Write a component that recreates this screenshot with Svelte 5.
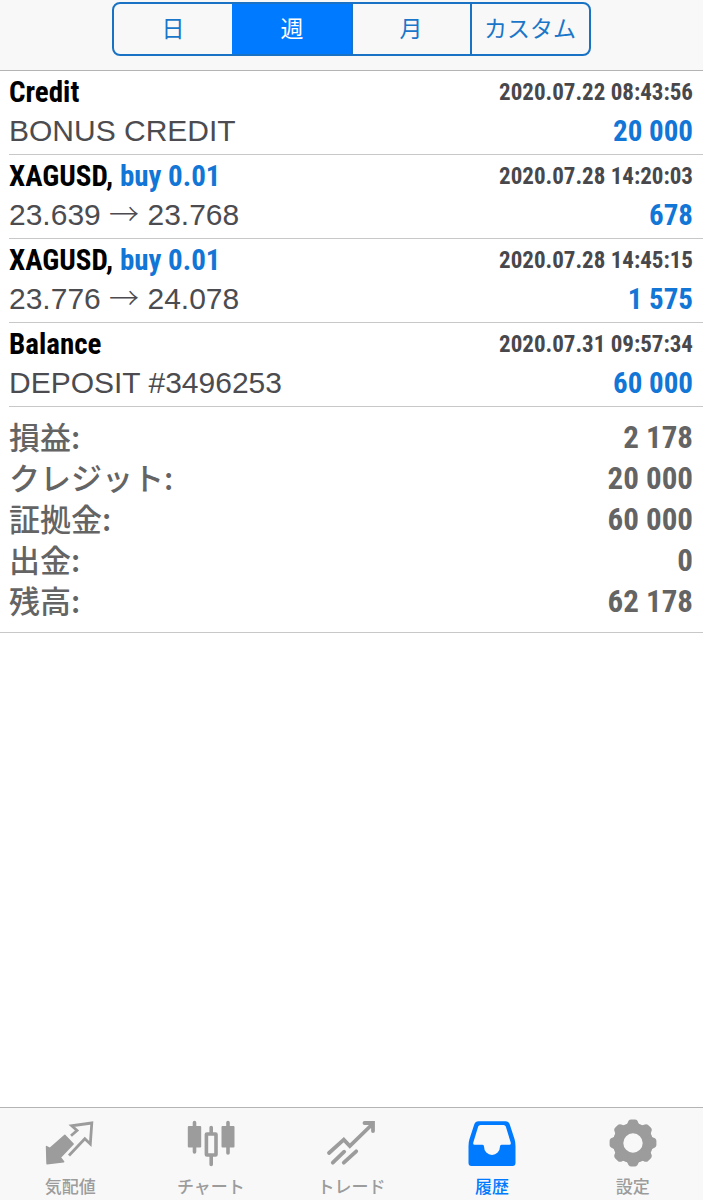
<script lang="ts">
	const periods = ['日', '週', '月', 'カスタム'];
	let period = $state('週');

	const deals = [
		{ title: 'Credit', side: '', time: '2020.07.22 08:43:56', from: 'BONUS CREDIT', to: '', profit: '20 000' },
		{ title: 'XAGUSD,', side: 'buy 0.01', time: '2020.07.28 14:20:03', from: '23.639', to: '23.768', profit: '678' },
		{ title: 'XAGUSD,', side: 'buy 0.01', time: '2020.07.28 14:45:15', from: '23.776', to: '24.078', profit: '1 575' },
		{ title: 'Balance', side: '', time: '2020.07.31 09:57:34', from: 'DEPOSIT #3496253', to: '', profit: '60 000' }
	];

	const summary = [
		['損益:', '2 178'],
		['クレジット:', '20 000'],
		['証拠金:', '60 000'],
		['出金:', '0'],
		['残高:', '62 178']
	];

	const tabs = [
		{ id: 'quotes', label: '気配値' },
		{ id: 'chart', label: 'チャート' },
		{ id: 'trade', label: 'トレード' },
		{ id: 'history', label: '履歴' },
		{ id: 'settings', label: '設定' }
	];
	let tab = $state('history');

	const teeth = [0, 45, 90, 135, 180, 225, 270, 315];
</script>

<div class="app">
	<header class="topbar">
		<div class="segmented">
			{#each periods as p}
				<button class="segment" class:active={period === p} onclick={() => (period = p)}>{p}</button>
			{/each}
		</div>
	</header>

	<main class="content">
		<ul class="deals">
			{#each deals as deal}
				<li class="deal">
					<div class="line">
						<span class="title">{deal.title}{#if deal.side}{' '}<span class="side">{deal.side}</span>{/if}</span>
						<time class="time">{deal.time}</time>
					</div>
					<div class="line">
						<span class="detail">{deal.from}{#if deal.to}{' '}<span class="arrow">→</span>{' '}{deal.to}{/if}</span>
						<span class="profit">{deal.profit}</span>
					</div>
				</li>
			{/each}
		</ul>

		<dl class="summary">
			{#each summary as [label, value]}
				<div class="total">
					<dt>{label}</dt>
					<dd>{value}</dd>
				</div>
			{/each}
		</dl>
	</main>

	<nav class="tabbar">
		{#each tabs as t}
			<button class="tab" class:active={tab === t.id} onclick={() => (tab = t.id)}>
				<svg class="icon" viewBox="0 0 48 48" aria-hidden="true">
					{#if t.id === 'quotes'}
						<path
							d="M.5 27.5 4 29.3 18.8 16.3 27.2 25 14.3 38.5 17.7 42.7 1 44.7Z"
							fill="currentColor"
							stroke="currentColor"
							stroke-width="1.4"
							stroke-linejoin="round"
						/>
						<path d="M25 16.8 31 11.5 25.7 6.8 45.8 4 44.3 25 38.8 19.8 23 36.5" fill="none" stroke="currentColor" stroke-width="2.8" />
					{:else if t.id === 'chart'}
						<path d="M7.5 3.5V33M24.2 8.5V14M24.2 37V45.5M41 3.5V34" fill="none" stroke="currentColor" stroke-width="3.6" stroke-linecap="round" />
						<rect x=".8" y="7" width="13.4" height="21.4" rx="1" fill="currentColor" />
						<rect x="34.5" y="7" width="13" height="21.4" rx="1" fill="currentColor" />
						<rect x="19.4" y="15" width="9.6" height="21" rx="0.5" fill="none" stroke="currentColor" stroke-width="3.6" />
					{:else if t.id === 'trade'}
						<path
							d="M2 34 16.8 20.7 22.8 27 45.5 5M37.5 4H46V12M5.8 43.7 17.2 32.7M16.8 43.7 29.2 32.3"
							fill="none"
							stroke="currentColor"
							stroke-width="3.8"
							stroke-linecap="round"
						/>
					{:else if t.id === 'history'}
						<path
							fill="currentColor"
							fill-rule="evenodd"
							d="M10.5 2.3H37.5Q40.6 2.3 41.7 5.2L46.5 20Q47.5 23 47.5 27V44Q47.5 47 44.5 47H3.5Q.5 47 .5 44V27Q.5 23 1.5 20L6.3 5.2Q7.4 2.3 10.5 2.3ZM12.5 6Q10.7 6 10.2 7.6L5.3 23.5Q4.8 25.7 6.5 25.7H14.5Q16 25.7 16 27.5A8 8.5 0 0 0 32 27.5Q32 25.7 33.5 25.7H41.5Q43.2 25.7 42.7 23.5L37.8 7.6Q37.3 6 35.5 6Z"
						/>
					{:else}
						<circle cx="24" cy="24" r="14.9" fill="none" stroke="currentColor" stroke-width="10.4" />
						{#each teeth as angle}
							<path
								transform="rotate({angle} 24 24)"
								fill="currentColor"
								d="M15 7.8Q17.6 6.8 18.6 4Q19.6 .6 22 .6H26Q28.4 .6 29.4 4Q30.4 6.8 33 7.8L28 12H20Z"
							/>
						{/each}
					{/if}
				</svg>
				<span>{t.label}</span>
			</button>
		{/each}
	</nav>
</div>

<style>
	:global(body) {
		margin: 0;
		background: #fff;
	}
	.app {
		display: flex;
		flex-direction: column;
		min-height: 100vh;
		font-family: 'Liberation Sans', 'Noto Sans CJK JP', sans-serif;
	}
	button {
		margin: 0;
		padding: 0;
		border: 0;
		background: none;
		font-family: inherit;
		cursor: pointer;
	}
	.topbar {
		display: flex;
		justify-content: center;
		padding: 2px 0 14px;
		background: #f8f8f8;
		border-bottom: 1px solid #b4b4b4;
	}
	.segmented {
		display: flex;
		width: 68%;
		height: 54px;
		box-sizing: border-box;
		border: 2px solid #1a72c4;
		border-radius: 8px;
		overflow: hidden;
	}
	.segment {
		flex: 1;
		padding-bottom: 4px;
		color: #1a76c8;
		font-size: 23px;
		font-weight: 400;
	}
	.segment + .segment {
		border-left: 2px solid #1a72c4;
	}
	.segment.active {
		background: #007aff;
		border-color: #007aff;
		color: #fff;
	}
	.content {
		flex: 1;
	}
	.deals {
		margin: 0;
		padding: 0 0 0 9px;
		list-style: none;
	}
	.deal {
		padding: 2px 10px 3px 0;
		border-bottom: 1px solid #c8c8c8;
	}
	.line {
		display: flex;
		justify-content: space-between;
		height: 39px;
		line-height: 39px;
		white-space: nowrap;
	}
	.title,
	.time,
	.profit,
	dd {
		font-family: 'Roboto Condensed', 'Liberation Sans Narrow', 'Liberation Sans', sans-serif;
		font-weight: 700;
	}
	.title {
		color: #000;
		font-size: 29px;
	}
	.side,
	.profit {
		color: #1276d6;
	}
	.time {
		color: #48484c;
		font-size: 23px;
	}
	.detail {
		color: #4c4c50;
		font-size: 30px;
		line-height: 37px;
	}
	.arrow {
		font-family: 'Noto Sans CJK JP', sans-serif;
		font-weight: 300;
		line-height: 1;
	}
	.profit {
		font-size: 29px;
	}
	.summary {
		margin: 0;
		padding: 10px 10px 10px 9px;
		border-bottom: 1px solid #c8c8c8;
		color: #646464;
	}
	.total {
		display: flex;
		justify-content: space-between;
		height: 41px;
		line-height: 41px;
	}
	dt {
		font-family: 'Noto Sans CJK JP', sans-serif;
		font-size: 31px;
		font-weight: 500;
		line-height: 37px;
	}
	dd {
		margin: 0;
		font-size: 31px;
	}
	.tabbar {
		display: flex;
		background: #f8f8f8;
		border-top: 1px solid #b4b4b4;
	}
	.tab {
		display: flex;
		flex: 1;
		flex-direction: column;
		align-items: center;
		gap: 9px;
		padding: 11px 0 1px;
		color: #9c9c9c;
		font-size: 17px;
		font-weight: 500;
		line-height: 23px;
	}
	.tab.active {
		color: #007aff;
	}
	.icon {
		width: 48px;
		height: 48px;
		overflow: visible;
	}
</style>
